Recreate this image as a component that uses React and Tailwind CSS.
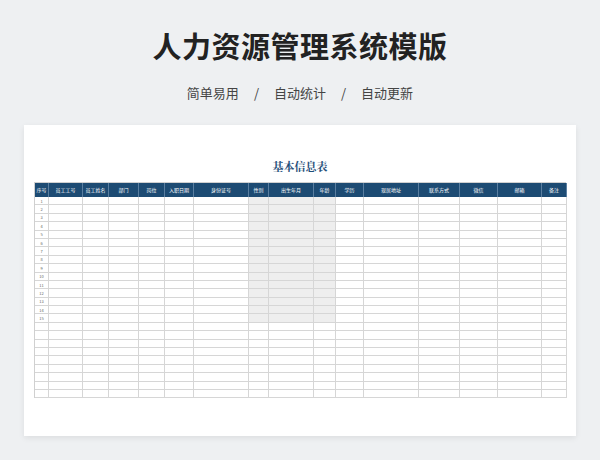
const cols = [
  ['序号', 14], ['员工工号', 34], ['员工姓名', 26], ['部门', 30], ['岗位', 26], ['入职日期', 29],
  ['身份证号', 55], ['性别', 20], ['出生年月', 45], ['年龄', 22], ['学历', 28], ['现居地址', 55],
  ['联系方式', 41], ['微信', 38], ['邮箱', 44], ['备注', 25],
]
const tpl = cols.map(c => c[1] + 'px').join(' ')
const rows = Array.from({ length: 24 }, (_, i) => i)

export default function App() {
  return (
    <div className="w-[600px] h-[460px] bg-[#eef0f2] flex flex-col items-center" style={{ fontFamily: '"Noto Sans CJK SC", sans-serif' }}>
      <h1 className="mt-[25px] text-[29px] leading-[40px] font-bold text-[#222] tracking-[0.5px]">人力资源管理系统模版</h1>
      <div className="mt-[19px] flex gap-[15px] text-[13px] leading-[18px] text-[#444]">
        <span>简单易用</span><span>/</span><span>自动统计</span><span>/</span><span>自动更新</span>
      </div>
      <div className="mt-[23px] w-[552px] h-[311px] bg-white shadow-[0_2px_6px_rgba(0,0,0,0.08)] flex flex-col items-center">
        <div className="mt-[34px] text-[11px] leading-[14px] font-bold text-[#1f4e79]" style={{ fontFamily: '"Noto Serif CJK SC", "Noto Sans CJK SC", serif' }}>基本信息表</div>
        <div className="mt-[9px] w-[532px] border-l border-t border-[#d0d0d0]">
          <div className="grid bg-[#1d4b73]" style={{ gridTemplateColumns: tpl }}>
            {cols.map(([t]) => (
              <div key={t} className="h-[14px] border-r border-[#5a7ea0] text-white text-[5px] flex items-center justify-center">{t}</div>
            ))}
          </div>
          {rows.map(r => (
            <div key={r} className="grid" style={{ gridTemplateColumns: tpl }}>
              {cols.map(([t], ci) => (
                <div key={t} className={`h-[8.4px] border-r border-b border-[#d6d6d6] text-[4px] text-[#666] flex items-center justify-center ${r < 15 && ci >= 7 && ci <= 9 ? 'bg-[#eeeeee]' : ''}`}>
                  {ci === 0 && r < 15 ? r + 1 : ''}
                </div>
              ))}
            </div>
          ))}
        </div>
      </div>
    </div>
  )
}
